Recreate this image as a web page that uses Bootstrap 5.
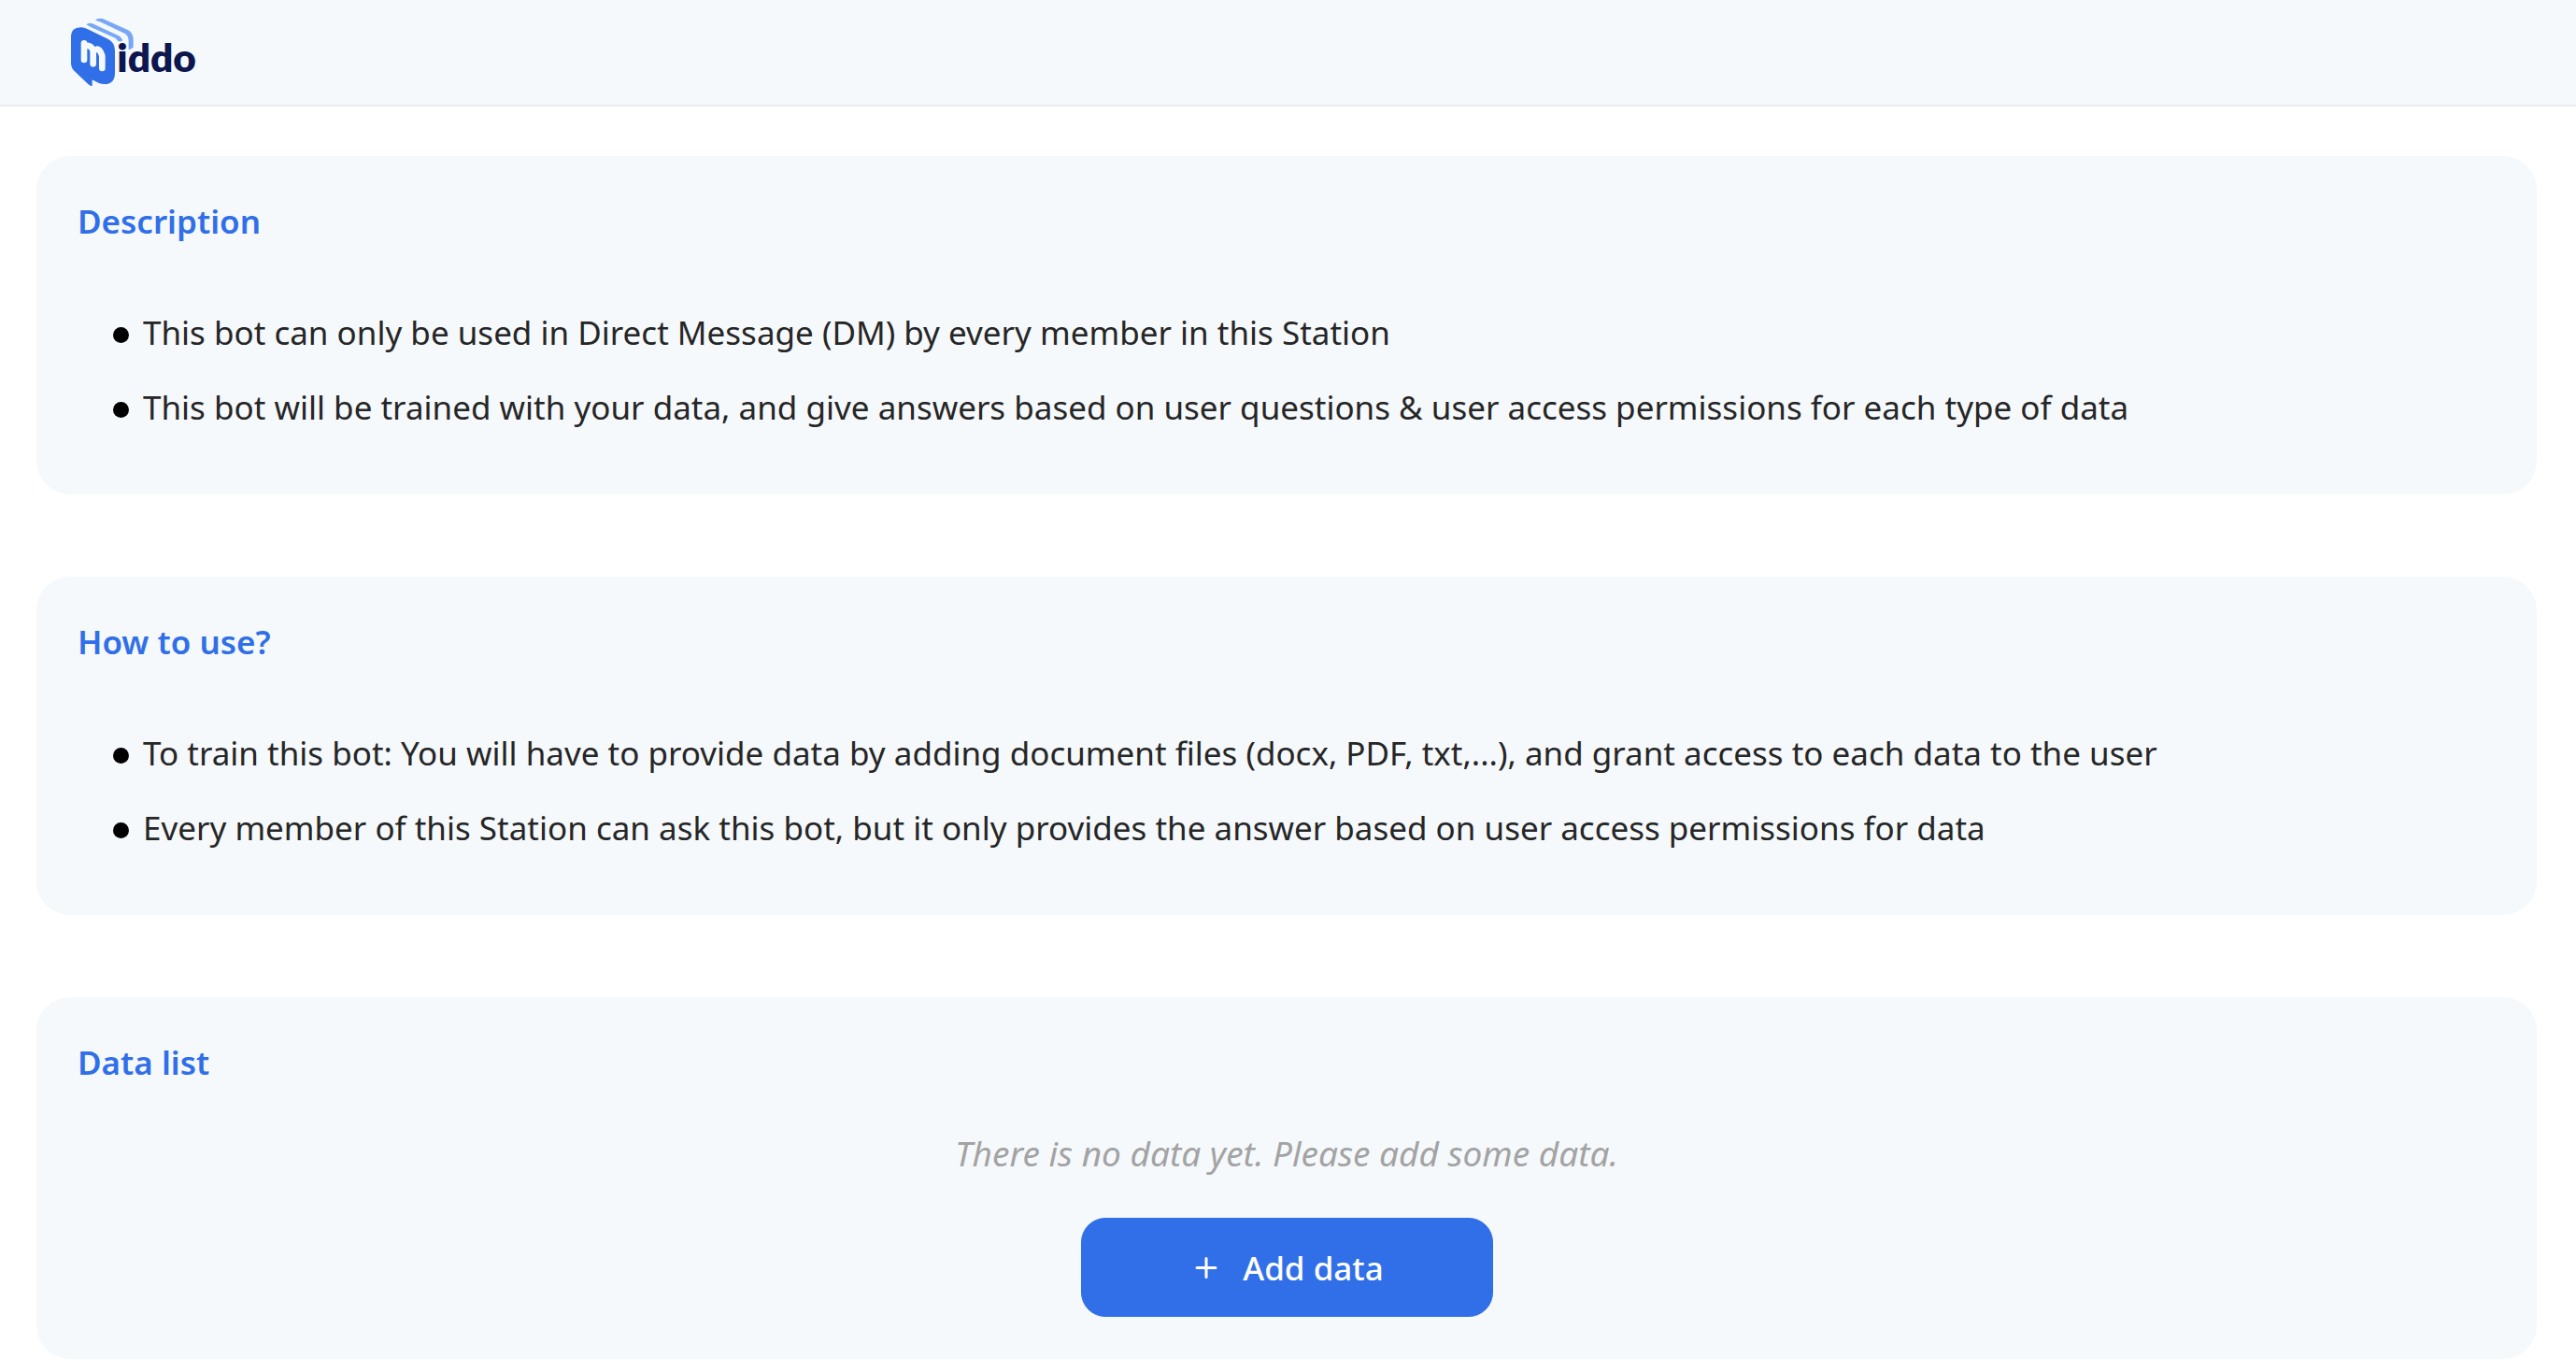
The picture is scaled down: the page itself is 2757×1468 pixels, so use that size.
<!DOCTYPE html>
<html lang="en">
<head>
<meta charset="utf-8">
<meta name="viewport" content="width=device-width, initial-scale=1">
<title>Middo</title>
<link href="https://cdn.jsdelivr.net/npm/bootstrap@5.3.0/dist/css/bootstrap.min.css" rel="stylesheet">
<style>
  body { font-family: "Noto Sans", "Open Sans", sans-serif; font-size: 35px; line-height: 54px; color: #262626; background: #fff; }
  .top-bar { height: 114px; padding: 0 76px; background: #f5f9fc; border-bottom: 2px solid #ececee; }
  .logo { width: 134px; height: 74px; }
  .page-body { padding: 53px 42px 14px 39px; gap: 88px; }
  .panel { padding: 43px 44px 45px; background: #f5f9fc; border-radius: 36px; }
  .panel-title { font-size: 35px; line-height: 54px; font-weight: 600; color: #306fe8; }
  .bullets { margin: 52px 0 8px; padding-left: 38px; line-height: 80px; }
  .bullets li { display: flex; align-items: center; gap: 15px; }
  .bullets li::before { content: ""; flex: none; width: 17px; height: 17px; margin-top: 4px; border-radius: 50%; background: #000; }
  .empty-note { margin-top: 43px; font-size: 37px; color: #a3a3a3; }
  .add-btn { --bs-btn-bg: #306fe8; --bs-btn-border-color: #306fe8; width: 441px; height: 106px; margin-top: 42px; padding: 2px 12px 0 18px; border-radius: 26px; font-size: 35px; gap: 27px; font-weight: 500; }
</style>
</head>
<body>
<header class="top-bar d-flex align-items-center">
  <a href="#" class="d-flex" aria-label="Middo">
    <svg class="logo" viewBox="48 42 402 222" aria-hidden="true">
      <path d="M48 104Q48 73 80 73Q90 73 102 79L168 111Q189 122 189 148V218Q189 255 156 255Q147 255 138 252L119 242Q115 240 116 246V261Q108 261 103 255L62 216Q48 204 48 188Z" fill="#306fe8"/>
      <path d="M90 177V124M90 134Q112 126 119 148V190M119 150Q138 130 148 165V204" fill="none" stroke="#f5f9fc" stroke-width="20" stroke-linecap="round" stroke-linejoin="round"/>
      <path d="M97 64Q106 57 117 61L198 98Q211 104 214 115Q206 121 198 116Q195 110 187 106L113 73Q105 68 97 64Z" fill="#79a7f5"/>
      <path d="M126 48Q138 42 150 45L230 81Q248 90 248 112V137Q241 142 233 145V116Q233 99 220 92L141 55Q132 53 126 48Z" fill="#79a7f5"/>
      <text x="196" y="215" font-family="Lato, sans-serif" font-weight="800" font-size="127" fill="#0d164f">iddo</text>
    </svg>
  </a>
</header>
<main class="page-body d-flex flex-column">
  <section class="panel">
    <h2 class="panel-title m-0">Description</h2>
    <ul class="bullets list-unstyled">
      <li>This bot can only be used in Direct Message (DM) by every member in this Station</li>
      <li>This bot will be trained with your data, and give answers based on user questions &amp; user access permissions for each type of data</li>
    </ul>
  </section>
  <section class="panel">
    <h2 class="panel-title m-0">How to use?</h2>
    <ul class="bullets list-unstyled">
      <li>To train this bot: You will have to provide data by adding document files (docx, PDF, txt,...), and grant access to each data to the user</li>
      <li>Every member of this Station can ask this bot, but it only provides the answer based on user access permissions for data</li>
    </ul>
  </section>
  <section class="panel d-flex flex-column align-items-center">
    <h2 class="panel-title m-0 align-self-start">Data list</h2>
    <p class="empty-note fst-italic mb-0">There is no data yet. Please add some data.</p>
    <button type="button" class="add-btn btn btn-primary d-flex align-items-center justify-content-center">
      <svg width="24" height="24" viewBox="0 0 24 24" fill="none" stroke="currentColor" stroke-width="3" stroke-linecap="round" aria-hidden="true"><path d="M12 1.5v20M2 11.5h20"/></svg>
      Add data
    </button>
  </section>
</main>
<script src="https://cdn.jsdelivr.net/npm/bootstrap@5.3.0/dist/js/bootstrap.bundle.min.js"></script>
</body>
</html>
